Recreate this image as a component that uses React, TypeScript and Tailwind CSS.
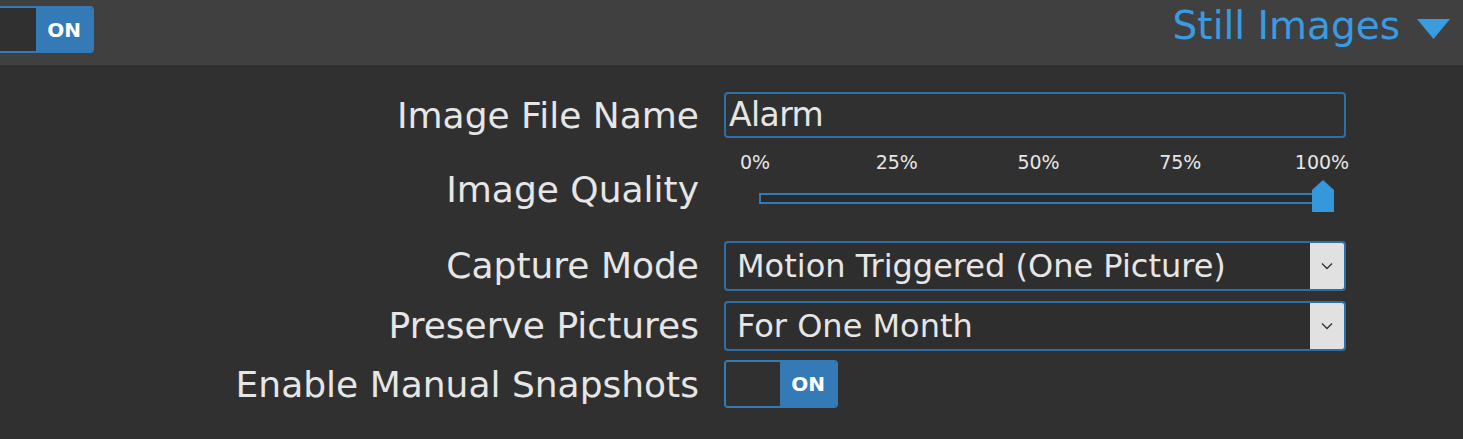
import React from "react";

const FONT = '"DejaVu Sans", sans-serif';

function Toggle({ className = "" }: { className?: string }) {
  return (
    <div className={`flex w-[114px] rounded-[4px] border-2 border-[#337ab7] overflow-hidden ${className}`}>
      <div className="w-[54px] bg-[#303030]" />
      <div className="flex flex-1 items-center justify-center bg-[#337ab7] text-[20px] font-bold text-white">
        ON
      </div>
    </div>
  );
}

function Select({ value }: { value: string }) {
  return (
    <div className="flex h-[50px] w-[622px] items-stretch rounded-[4px] border-2 border-[#2f6fa6] bg-[#2e2e2e]">
      <div className="flex flex-1 items-center pl-[11px] text-[32px] text-[#e6e6e6]">{value}</div>
      <div className="flex w-[34px] items-center justify-center rounded-r-[2px] bg-[#e1e1e1]">
        <svg width="12" height="8" viewBox="0 0 12 8" fill="none">
          <path d="M1 1.5 L6 6.5 L11 1.5" stroke="#333" strokeWidth="1.3" />
        </svg>
      </div>
    </div>
  );
}

export default function App() {
  const ticks = ["0%", "25%", "50%", "75%", "100%"];
  return (
    <div className="h-[439px] w-[1463px] overflow-hidden bg-[#303030]" style={{ fontFamily: FONT }}>
      <div className="flex h-[65px] items-start justify-between bg-[#404040] pr-[13px]">
        <Toggle className="ml-[-20px] mt-[6px] h-[47px]" />
        <div className="mt-[6px] flex items-start gap-[17px]">
          <span className="text-[39px] leading-none text-[#3a9be0]">Still Images</span>
          <svg className="mt-[13px]" width="33" height="20" viewBox="0 0 33 20">
            <path d="M0 0 H33 L16.5 20 Z" fill="#3a9be0" />
          </svg>
        </div>
      </div>

      <div className="mt-[27px] grid grid-cols-[699px_622px] gap-x-[25px] text-[#e6e6e6]">
        <div className="flex h-[46px] items-center justify-end pt-[2px] text-[36px]">Image File Name</div>
        <div className="flex h-[46px] items-center rounded-[4px] border-2 border-[#2f6fa6] pl-[3px] text-[33px] tracking-[-0.6px]">Alarm</div>

        <div className="flex h-[103px] items-center justify-end text-[36px]">Image Quality</div>
        <div className="flex h-[103px] flex-col">
          <div className="ml-[31px] mt-[12px] flex h-[24px] w-[567px] justify-between text-[19px] leading-[24px]">
            {ticks.map((t) => (
              <div key={t} className="flex w-0 justify-center whitespace-nowrap">{t}</div>
            ))}
          </div>
          <div className="relative ml-[35px] mt-[6px] flex h-[32px] w-[575px] items-center">
            <div className="mt-[5px] h-[11px] w-[555px] border-2 border-[#2f7bb5] bg-[#2a2a2a]" />
            <svg className="absolute right-0 top-0" width="22" height="32" viewBox="0 0 22 32">
              <path d="M11 0 L22 10 V31 Q22 32 21 32 H1 Q0 32 0 31 V10 Z" fill="#3498db" />
            </svg>
          </div>
        </div>

        <div className="flex h-[50px] items-center justify-end text-[36px]">Capture Mode</div>
        <Select value="Motion Triggered (One Picture)" />

        <div className="mt-[10px] flex h-[50px] items-center justify-end text-[36px]">Preserve Pictures</div>
        <div className="mt-[10px]"><Select value="For One Month" /></div>

        <div className="mt-[9px] flex h-[48px] items-center justify-end pt-[2px] text-[36px]">Enable Manual Snapshots</div>
        <div className="mt-[9px]"><Toggle className="h-[48px]" /></div>
      </div>
    </div>
  );
}
